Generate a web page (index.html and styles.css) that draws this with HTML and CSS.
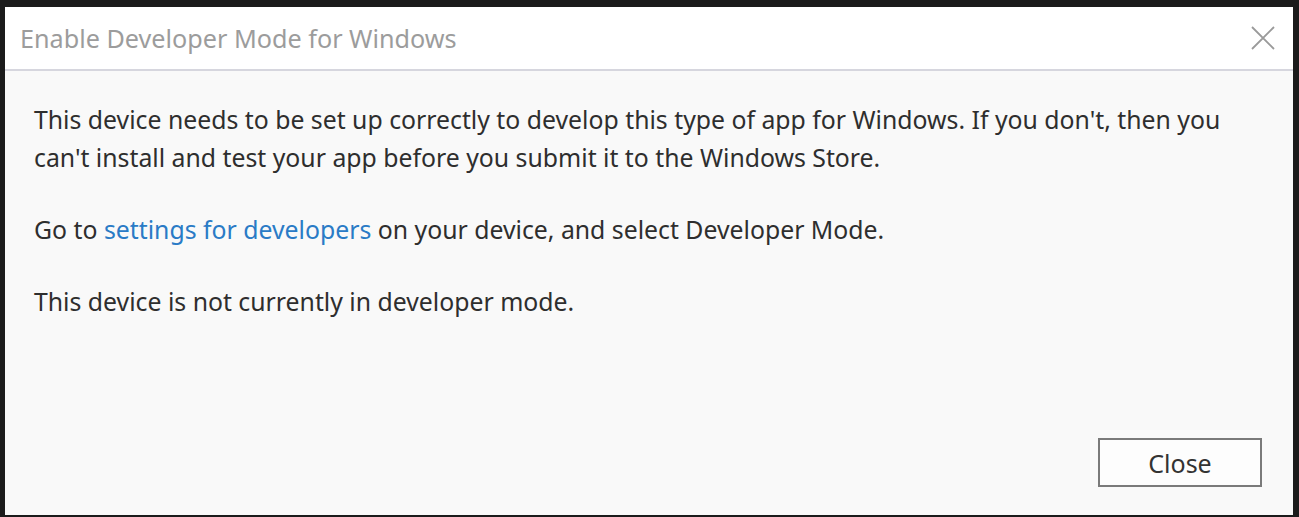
FILE: index.html
```html
<!DOCTYPE html>
<html>
<head>
    <title>Enable Developer Mode for Windows</title>
    <link rel="stylesheet" href="styles.css">
</head>

<body>
    <div class="dialog">
        <div class="titlebar">
            <span class="title">Enable Developer Mode for Windows</span>
            <span class="close-x">
                <svg width="24" height="24" viewBox="0 0 24 24">
                    <path d="M1 1 L23 23 M23 1 L1 23" stroke="#9a9a9a" stroke-width="1.8" fill="none"/>
                </svg>
            </span>
        </div>

        <div class="content">
            <p>This device needs to be set up correctly to develop this type of app for Windows. If you don't, then you can't install and test your app before you submit it to the Windows Store.</p>
            <p>Go to <a href="#">settings for developers</a> on your device, and select Developer Mode.</p>
            <p>This device is not currently in developer mode.</p>
        </div>

        <div class="footer">
            <button type="button" class="btn">Close</button>
        </div>
    </div>
</body>

</html>
```
FILE: styles.css
```css
body {
    margin: 0;
    background-color: #1b1b1b;
    padding: 7px 6px 2px 5px;
    font-family: "Noto Sans", "Open Sans", sans-serif;
}

.dialog {
    height: 508px;
    display: flex;
    flex-direction: column;
    background-color: #f9f9f9;
}

.titlebar {
    height: 62px;
    background-color: white;
    border-bottom: 2px solid #d6d6de;
    display: flex;
    align-items: center;
    justify-content: space-between;
    padding: 0 18px 0 15px;
}

.title {
    color: #9c9c9c;
    font-size: 25.2px;
}

.close-x {
    display: flex;
}

.content {
    flex: 1;
    padding: 29px 34px 0 29px;
    color: #2e2e2e;
    font-size: 24.8px;
    line-height: 38px;
}

.content p {
    margin: 0 0 34px 0;
}

.content a {
    color: #2a7bc6;
    text-decoration: none;
}

.footer {
    display: flex;
    justify-content: flex-end;
    padding: 0 31px 28px 0;
}

.btn {
    width: 164px;
    height: 49px;
    background-color: #fdfdfd;
    border: 2px solid #7a7a7a;
    color: #333;
    font-family: inherit;
    font-size: 25px;
}
```
